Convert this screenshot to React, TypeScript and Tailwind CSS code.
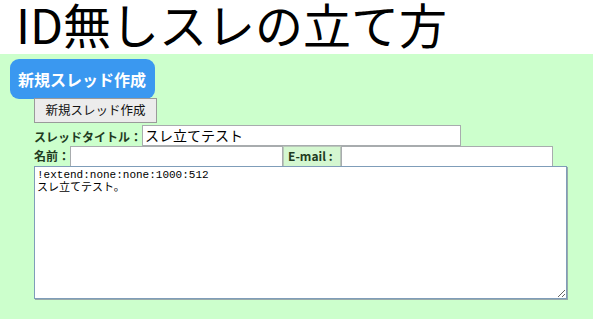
const jp = "font-['Meiryo','Noto_Sans_CJK_JP',sans-serif]";

const App = () => (
  <div className={`w-[593px] h-[319px] overflow-hidden bg-white ${jp}`}>
    <h1 className="h-[54px] pl-[16px] text-[48px] leading-[46px] text-black font-normal">
      ID無しスレの立て方
    </h1>
    <div className="h-[265px] bg-[#ccffcc] pt-[5px]">
      <div className="ml-[10px] w-[145px] h-[40px] rounded-[9px] bg-[#3a98f0] flex items-center pl-[8px] text-white text-[16px] font-bold">
        新規スレッド作成
      </div>
      <div className="ml-[34px] mt-[-1px] flex flex-col">
        <button className="w-[123px] h-[25px] border border-[#9a9a9a] bg-[#ececec] text-[12.5px] text-[#111] leading-none">
          新規スレッド作成
        </button>
        <div className="flex items-end mt-[2px] h-[21px]">
          <span className="w-[108px] text-[12px] font-bold text-[#1f3b1f] leading-[18px]">スレッドタイトル：</span>
          <input
            className="w-[319px] h-[21px] border border-[#a8acae] bg-white px-[2px] text-[14px] text-black outline-none"
            defaultValue="スレ立てテスト"
          />
        </div>
        <div className="flex items-stretch h-[21px]">
          <span className="w-[36px] text-[12px] font-bold text-[#1f3b1f] leading-[20px]">名前：</span>
          <input className="w-[213px] border border-[#a8acae] bg-white outline-none" />
          <span className="w-[58px] border border-[#b8c8b8] bg-[#d4f7d0] text-[12px] font-bold text-[#1f3b1f] leading-[18px] pl-[4px]">
            E-mail :
          </span>
          <input className="w-[212px] border border-[#a8acae] bg-white outline-none" />
        </div>
        <textarea
          className="w-[533px] h-[133px] mt-[-1px] border border-[#7f9db9] bg-white px-[2px] py-[2px] text-[11px] leading-[13px] text-black outline-none resize font-['Liberation_Mono','Noto_Sans_CJK_JP',monospace] shadow-[1px_1px_0_#9aa]"
          defaultValue={"!extend:none:none:1000:512\nスレ立てテスト。"}
        />
      </div>
    </div>
  </div>
);

export default App;
